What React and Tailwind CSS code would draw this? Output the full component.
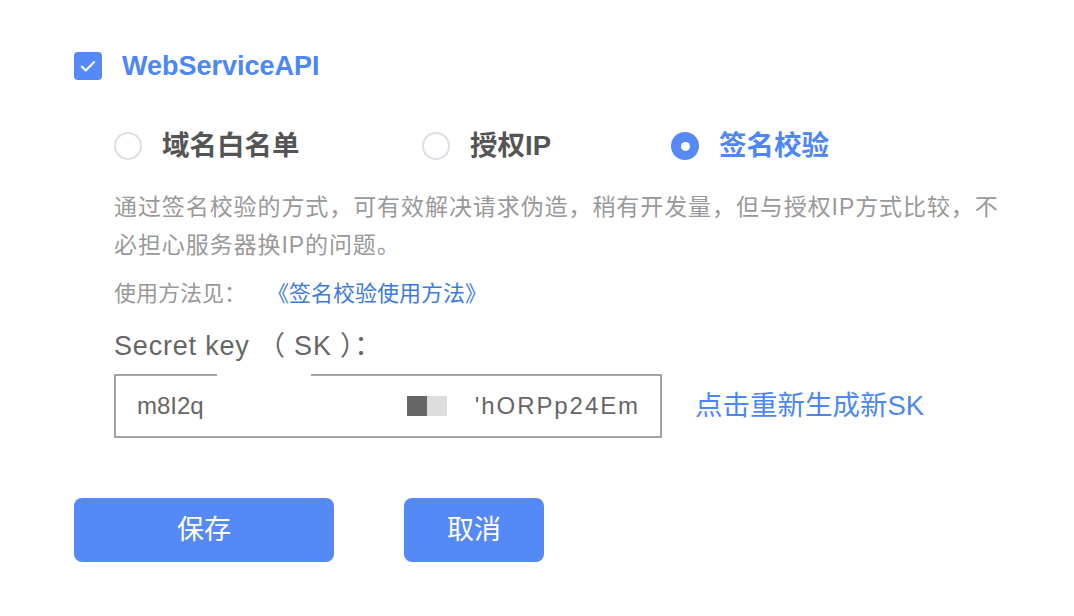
import React, { useState } from 'react';

const font = { fontFamily: '"Liberation Sans", "Noto Sans CJK SC", sans-serif' };

const Radio = ({ checked }) => (
  <span
    className={`w-[28px] h-[28px] rounded-full flex items-center justify-center shrink-0 ${
      checked ? 'bg-[#5589f6]' : 'border-2 border-[#dcdfe6] bg-white'
    }`}
  >
    {checked && <span className="w-[9px] h-[9px] rounded-full bg-white" />}
  </span>
);

export default function App() {
  const [mode, setMode] = useState('sign');

  const options = [
    { key: 'domain', label: '域名白名单', width: 'w-[308px]' },
    { key: 'ip', label: '授权IP', width: 'w-[249px]' },
    { key: 'sign', label: '签名校验', width: '' },
  ];

  return (
    <div className="min-h-[616px] bg-white pl-[74px] pt-[52px]" style={font}>
      {/* service checkbox */}
      <div className="flex items-center gap-[20px] h-[28px]">
        <span className="w-[28px] h-[28px] rounded-[4px] bg-[#5589f6] flex items-center justify-center">
          <svg width="18" height="18" viewBox="0 0 16 16" fill="none">
            <path d="M2.5 8.5l3.5 3.5 7.5-7.5" stroke="white" strokeWidth="1.8" strokeLinecap="round" strokeLinejoin="round" />
          </svg>
        </span>
        <span className="text-[27px] font-semibold text-[#4d86f7] leading-none">WebServiceAPI</span>
      </div>

      <div className="pl-[40px]">
        {/* verification mode */}
        <div className="flex items-center mt-[52px] h-[28px]">
          {options.map((o) => (
            <label key={o.key} className={`flex items-center gap-[20px] cursor-pointer ${o.width}`} onClick={() => setMode(o.key)}>
              <Radio checked={mode === o.key} />
              <span className={`text-[27.5px] font-bold leading-none ${mode === o.key ? 'text-[#4d86f7]' : 'text-[#555555]'}`}>
                {o.label}
              </span>
            </label>
          ))}
        </div>

        <p className="mt-[28px] w-[895px] text-[23px] leading-[38px] text-[#999999] tracking-[0.04em]">
          通过签名校验的方式，可有效解决请求伪造，稍有开发量，但与授权IP方式比较，不必担心服务器换IP的问题。
        </p>
        <div className="mt-[11px] text-[22px] leading-[38px] text-[#999999] flex">
          <span>使用方法见：</span>
          <a href="#" className="ml-[21px] text-[#3d7ae0]">《签名校验使用方法》</a>
        </div>

        <div className="mt-[15px] text-[27px] leading-[36px] text-[#666666] tracking-[0.03em] whitespace-pre">Secret key （ SK ）：</div>

        <div className="mt-[10px] flex items-center">
          <div className="relative w-[548px] h-[64px] border-2 border-[#a3a3a3] flex items-center pl-[21px] pr-[20px] text-[24px] text-[#666666]">
            <span className="absolute top-[-2px] left-[101px] w-[94px] h-[6px] bg-white" />
            <span>m8I2q</span>
            <span className="flex-1" />
            <span className="w-[20px] h-[20px] bg-[#666666]" />
            <span className="w-[20px] h-[20px] bg-[#dddddd]" />
            <span className="ml-[28px] tracking-[0.08em]">'hORPp24Em</span>
          </div>
          <a href="#" className="ml-[33px] text-[27.5px] text-[#4d86f7]">点击重新生成新SK</a>
        </div>
      </div>

      {/* actions */}
      <div className="mt-[60px] flex gap-[70px]">
        <button className="w-[260px] h-[64px] rounded-[8px] bg-[#5589f6] text-white text-[27px]">保存</button>
        <button className="w-[140px] h-[64px] rounded-[8px] bg-[#5589f6] text-white text-[27px]">取消</button>
      </div>
    </div>
  );
}
